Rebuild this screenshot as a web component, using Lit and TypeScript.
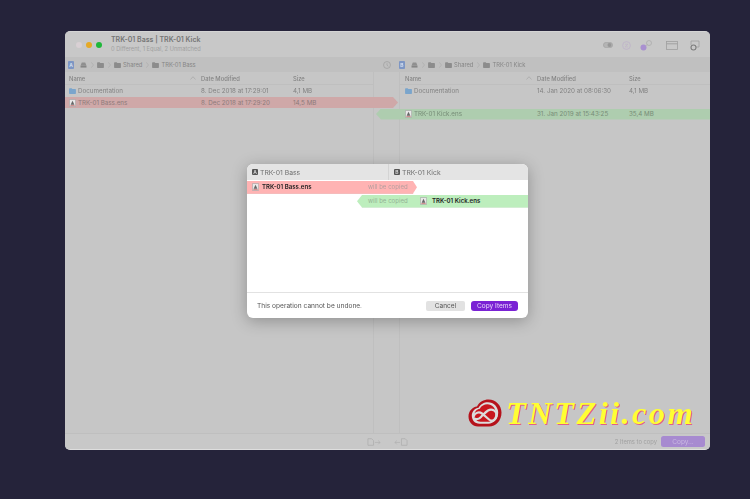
import { LitElement, html, css } from "lit";
import { customElement } from "lit/decorators.js";

const folder = (fill: string, w = 7, h = 6) => html`<svg class="ic" width=${w} height=${h} viewBox="0 0 8 7"><path d="M0 1.2Q0 .4 .8 .4H3L3.8 1.2H7.2Q8 1.2 8 2V6.2Q8 7 7.2 7H.8Q0 7 0 6.2Z" fill=${fill}/></svg>`;
const doc = html`<svg class="ic" width="7" height="8" viewBox="0 0 8 9"><path d="M.5 .5H7.5V8.5H.5Z" fill="#e8e8e8" stroke="#999" stroke-width=".6"/><path d="M4 2 6.2 6.6H1.8Z" fill="#666"/><path d="M1.5 7.4H6.5" stroke="#c05050" stroke-width=".7"/></svg>`;
const chev = html`<svg class="chev" width="3" height="8" viewBox="0 0 4 8"><path d="M.5 .5 3.3 4 .5 7.5" fill="none" stroke="#a8a8a8" stroke-width=".8"/></svg>`;
const vol = html`<svg class="ic" width="7" height="6" viewBox="0 0 8 7"><path d="M2 .5H6L7.5 4.5H.5Z" fill="#8f8f8f"/><rect x=".5" y="4.5" width="7" height="2" fill="#858585"/></svg>`;
const badge = (c: string, bg: string, fg: string, cls = "badge") => html`<span class=${cls} style="background:${bg};color:${fg}">${c}</span>`;

const path = (letter: string, name: string) => html`
  <div class="path">
    ${badge(letter, "#7d96c4", "#d8e2f2")}
    <span class="crumbs">${vol}${chev}${folder("#8c8c8c")}${chev}${folder("#8c8c8c")}<span>Shared</span>${chev}${folder("#8c8c8c")}<span>${name}</span></span>
  </div>`;

const head = html`
  <div class="row head">
    <span class="n">Name<svg class="sort" width="6" height="4" viewBox="0 0 6 4"><path d="M.5 3.5 3 .7 5.5 3.5" fill="none" stroke="#a6a6a6" stroke-width=".7"/></svg></span>
    <span class="d">Date Modified</span><span class="s">Size</span>
  </div>`;

const cloud = "M10 27.500C4.500 27.500 .5 23 .5 17.500 .5 12 4.500 8 9 7.500 11 3 16 .5 20.500 .5 28 .5 33.500 6.500 33.500 13.500 33.500 21.500 28 27.500 21 27.500Z";
const ccLogo = html`<svg class="cc" width="34" height="28" viewBox="0 0 34 28">
  <path d=${cloud} fill="#b5121b"/>
  <path d=${cloud} fill="#dcdcdc" transform="translate(3.400 2.800) scale(.8)"/>
  <path d=${cloud} fill="#c8161e" transform="translate(6 4.900) scale(.647)"/>
  <path d="M5.500 17.500C7 13.500 11 12.500 14 14.500L21 20.500C24 23 28 21 28.500 17 29 12 24 9 20 11.500 17.500 13 15.500 15.500 13 18 11 20 8 20.500 6.500 19.500" fill="none" stroke="#dcdcdc" stroke-width="2.200"/>
</svg>`;

@customElement("app-root")
export class AppRoot extends LitElement {
  static styles = css`
    :host { display: block; width: 750px; height: 499px; background: #25233a; font-family: "Inter", "Liberation Sans", sans-serif; overflow: hidden; }
    * { box-sizing: border-box; }
    .stage { position: relative; width: 750px; height: 499px; padding: 31px 40px 49px 65px; filter: blur(.35px); }
    .win { position: relative; width: 645px; height: 419px; background: #c6c6c6; border-radius: 5px; display: flex; flex-direction: column; overflow: hidden; color: #808080; font-size: 6.250px; border-top: 1px solid #d4d4d4; border-bottom: 1px solid #dedede; }
    .title { height: 25px; flex: none; display: flex; align-items: center; padding: 0 10px 0 11px; background: #c8c8c8; }
    .lights { display: flex; gap: 4px; margin-right: 9px; }
    .lights i { width: 6px; height: 6px; border-radius: 50%; display: block; }
    .ttl { display: flex; flex-direction: column; gap: 2px; line-height: 7px; margin-top: -1px; }
    .ttl b { font-size: 7px; font-weight: 600; color: #757575; }
    .ttl span { font-size: 5.700px; color: #a0a0a0; }
    .tools { margin-left: auto; display: flex; align-items: center; margin-top: 1px; }
    .tools svg { display: block; }
    .pathbar { height: 15px; flex: none; display: grid; grid-template-columns: 308px 23px 1fr; background: #c0c0c0; }
    .path { display: flex; align-items: center; padding-left: 3px; }
    .gut { display: flex; align-items: center; justify-content: flex-start; padding-left: 10px; }
    .badge { width: 6px; height: 8px; font-size: 5px; font-weight: 600; display: inline-flex; align-items: center; justify-content: center; border-radius: 1px; flex: none; }
    .crumbs { display: flex; align-items: center; margin-left: 6px; gap: 2px; color: #858585; font-size: 5.800px; }
    .ic { display: block; flex: none; }
    .chev { display: block; margin: 0 1.500px; }
    .main { flex: 1; display: grid; grid-template-columns: 308px 27px 1fr; min-height: 0; }
    .gutter { border-left: 1px solid #bfbfbf; border-right: 1px solid #bfbfbf; }
    .pane { min-width: 0; }
    .row { height: 11px; display: grid; grid-template-columns: 132px 92px 1fr; align-items: center; padding-left: 4px; color: #828282; white-space: nowrap; }
    .head { height: 13px; font-size: 5.800px; font-weight: 500; border-bottom: 1px solid #bfbfbf; color: #848484; }
    .first { height: 12px; }
    .n { display: flex; align-items: center; gap: 2px; position: relative; }
    .sort { position: absolute; right: 5px; top: 1px; }
    .right .row { padding-left: 5px; }
    .red { background: #cfa8a8; margin-right: -25px; clip-path: polygon(0 0, calc(100% - 5px) 0, 100% 50%, calc(100% - 5px) 100%, 0 100%); color: #8d7a7a; }
    .right .green { background: #aecdaf; margin-left: -24px; padding-left: 29px; margin-top: .5px; clip-path: polygon(5px 0, 100% 0, 100% 100%, 5px 100%, 0 50%); color: #768c77; }
    .foot { height: 16px; flex: none; display: flex; align-items: center; justify-content: flex-end; padding-right: 5px; border-top: 1px solid #bfbfbf; background: #c8c8c8; }
    .mid { position: absolute; left: 302px; bottom: 3px; display: flex; gap: 13px; }
    .count { color: #a0a0a0; font-size: 5.800px; margin-right: 4px; }
    .copy { width: 44px; height: 11px; border-radius: 2.500px; background: #a78ad0; color: #c9b9e2; font-size: 6.500px; display: flex; align-items: center; justify-content: center; }
    .dialog { position: absolute; left: 247px; top: 164px; width: 281px; height: 154px; background: #fff; border-radius: 6px; overflow: hidden; box-shadow: 0 3px 16px rgba(0,0,0,.28); display: flex; flex-direction: column; color: #333; font-size: 6.100px; }
    .dhead { height: 16px; flex: none; display: grid; grid-template-columns: 141px 1fr; background: #e4e4e4; color: #707070; font-size: 6.800px; }
    .dhead div { display: flex; align-items: center; gap: 2px; padding-left: 5px; }
    .dhead div + div { border-left: 1px solid #d4d4d4; }
    .dbadge { background: #555 !important; color: #ddd !important; width: 6px; height: 6.500px; font-size: 5px; }
    .items { flex: 1; display: flex; flex-direction: column; gap: 1.500px; padding-top: 1px; }
    .ditem { height: 12.500px; display: flex; align-items: center; font-weight: 600; color: #222; white-space: nowrap; }
    .dred { width: 170px; background: #ffb3b3; border-bottom: 1px solid #eb9e9e; clip-path: polygon(0 0, calc(100% - 4px) 0, 100% 50%, calc(100% - 4px) 100%, 0 100%); padding-left: 5px; }
    .dgreen { margin-left: 110px; width: 171px; background: #bdeebd; border-bottom: 1px solid #a8dca8; clip-path: polygon(5px 0, 100% 0, 100% 100%, 5px 100%, 0 50%); padding-left: 11px; }
    .wb { font-weight: 400; color: #b59e9e; }
    .dgreen .wb { color: #95b395; width: 52px; }
    .dred .fname { margin-left: 3px; width: 106px; }
    .dgreen .fname { margin-left: 5px; }
    .dfoot { height: 26px; flex: none; border-top: 1px solid #e2e2e2; display: flex; align-items: center; padding: 0 10px; color: #555; font-size: 6.600px; }
    .dfoot .btns { margin-left: auto; display: flex; gap: 6px; }
    .btn { height: 10px; border-radius: 2px; font-size: 6.500px; display: flex; align-items: center; justify-content: center; }
    .cancel { width: 39px; background: #e2e2e2; color: #555; }
    .ok { width: 47px; background: #7a22d4; color: #e8d8fa; border-radius: 3px; }
    .mark { position: absolute; left: 468px; top: 399px; display: flex; align-items: center; gap: 4px; }
    .cc { display: block; flex: none; }
    .wm { font-family: "Liberation Serif", serif; font-style: italic; font-weight: 700; font-size: 32.500px; line-height: 28px; letter-spacing: 2.400px; color: #ffff33; text-shadow: 1px 1px 0 #e0608a; white-space: nowrap; }
  `;

  render() {
    return html`<div class="stage">
      <div class="win">
        <div class="title">
          <div class="lights">
            <i style="background:#d9d0d4"></i><i style="background:#e6a925"></i><i style="background:#1fb83a"></i>
          </div>
          <div class="ttl"><b>TRK-01 Bass | TRK-01 Kick</b><span>0 Different, 1 Equal, 2 Unmatched</span></div>
          <div class="tools">
            <svg width="10" height="6" viewBox="0 0 10 6" style="margin-right:9px"><rect x=".4" y=".4" width="9.200" height="5.200" rx="2.600" fill="#b4b4b4" stroke="#a0a0a0" stroke-width=".6"/><circle cx="6.500" cy="3" r="2" fill="#979797"/></svg>
            <svg width="9" height="9" viewBox="0 0 9 9" style="margin-right:9px"><circle cx="4.500" cy="4.500" r="3.900" fill="none" stroke="#bfb2ca" stroke-width=".8"/><path d="M3 3.200H6L3 5.800H6" fill="none" stroke="#bfb2ca" stroke-width=".6"/></svg>
            <svg width="12" height="11" viewBox="0 0 12 11" style="margin-right:14px"><circle cx="3.500" cy="7.500" r="3" fill="#a990d0"/><circle cx="9" cy="3" r="2.500" fill="none" stroke="#adadad" stroke-width=".8"/><path d="M5.500 6 7.500 4.500" stroke="#adadad" stroke-width=".7"/></svg>
            <svg width="12" height="9" viewBox="0 0 12 9" style="margin-right:12px"><rect x=".5" y=".5" width="11" height="8" fill="none" stroke="#a0a0a0" stroke-width=".8"/><path d="M.5 2.800H11.500" stroke="#a0a0a0"/></svg>
            <svg width="10" height="11" viewBox="0 0 10 11"><path d="M1 5V1H9V7H6" fill="none" stroke="#a0a0a0" stroke-width=".8"/><circle cx="3.500" cy="7.500" r="2.500" fill="none" stroke="#7d7d7d" stroke-width="1.100"/></svg>
          </div>
        </div>
        <div class="pathbar">
          ${path("A", "TRK-01 Bass")}
          <div class="gut"><svg width="8" height="8" viewBox="0 0 9 9"><circle cx="4.500" cy="4.500" r="3.900" fill="none" stroke="#9e9e9e" stroke-width=".8"/><path d="M4.500 2.500V4.700L6 6" fill="none" stroke="#9e9e9e" stroke-width=".7"/></svg></div>
          ${path("B", "TRK-01 Kick")}
        </div>
        <div class="main">
          <div class="pane">
            ${head}
            <div class="row first"><span class="n">${folder("#7aa5cc")}Documentation</span><span>8. Dec 2018 at 17:29:01</span><span>4,1 MB</span></div>
            <div class="row red"><span class="n">${doc}TRK-01 Bass.ens</span><span>8. Dec 2018 at 17:29:20</span><span>14,5 MB</span></div>
          </div>
          <div class="gutter"></div>
          <div class="pane right">
            ${head}
            <div class="row first"><span class="n">${folder("#7aa5cc")}Documentation</span><span>14. Jan 2020 at 08:06:30</span><span>4,1 MB</span></div>
            <div class="row"></div>
            <div class="row green"><span class="n">${doc}TRK-01 Kick.ens</span><span>31. Jan 2019 at 15:43:25</span><span>35,4 MB</span></div>
          </div>
        </div>
        <div class="foot">
          <span class="count">2 Items to copy</span><div class="copy">Copy...</div>
        </div>
        <div class="mid">
          <svg width="14" height="8" viewBox="0 0 15 8"><path d="M1 .5H5L7 2.500V7.500H1Z" fill="none" stroke="#adadad" stroke-width=".8"/><path d="M8.500 4.500H14M12 2.500 14 4.500 12 6.500" fill="none" stroke="#adadad" stroke-width=".7"/></svg>
          <svg width="14" height="8" viewBox="0 0 15 8"><path d="M8 .5H12L14 2.500V7.500H8Z" fill="none" stroke="#adadad" stroke-width=".8"/><path d="M6.500 4.500H1M3 2.500 1 4.500 3 6.500" fill="none" stroke="#adadad" stroke-width=".7"/></svg>
        </div>
      </div>
      <div class="dialog">
        <div class="dhead">
          <div>${badge("A", "#555", "#ddd", "badge dbadge")}TRK-01 Bass</div>
          <div>${badge("B", "#555", "#ddd", "badge dbadge")}TRK-01 Kick</div>
        </div>
        <div class="items">
          <div class="ditem dred">${doc}<span class="fname">TRK-01 Bass.ens</span><span class="wb">will be copied</span></div>
          <div class="ditem dgreen"><span class="wb">will be copied</span>${doc}<span class="fname">TRK-01 Kick.ens</span></div>
        </div>
        <div class="dfoot">This operation cannot be undone.
          <div class="btns"><div class="btn cancel">Cancel</div><div class="btn ok">Copy Items</div></div>
        </div>
      </div>
      <div class="mark">${ccLogo}<span class="wm">TNTZii.com</span></div>
    </div>`;
  }
}
